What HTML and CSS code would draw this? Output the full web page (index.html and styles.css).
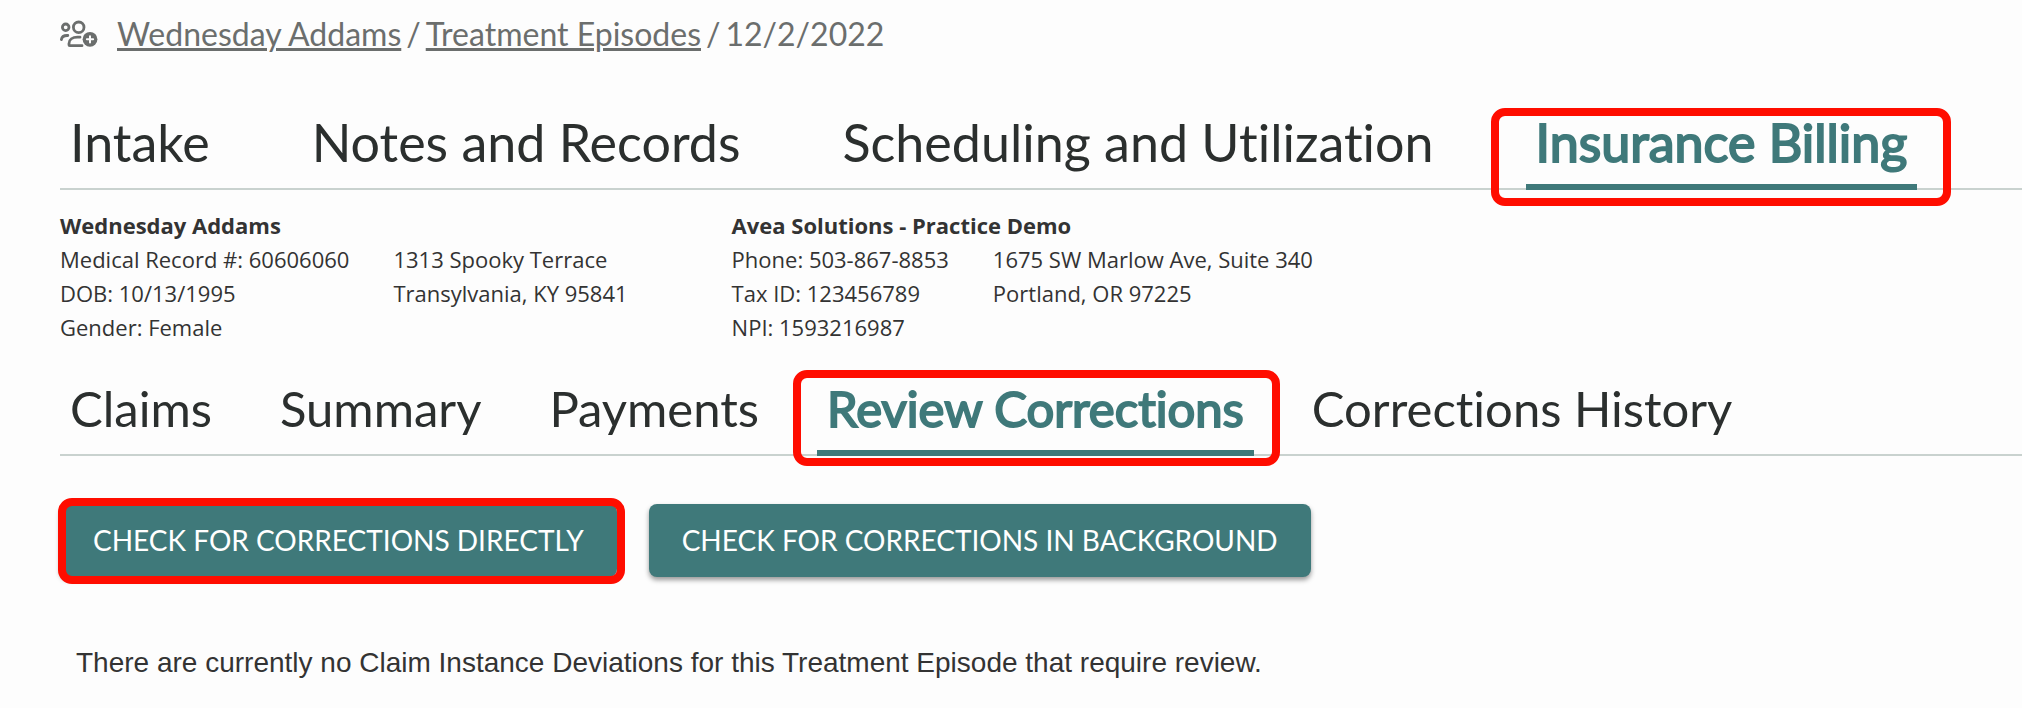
FILE: index.html
```html
<!DOCTYPE html>
<html lang="en">
<head>
  <meta charset="UTF-8">
  <meta name="viewport" content="width=device-width, initial-scale=1.0">
  <title>Review Corrections</title>
  <link rel="stylesheet" href="styles.css">
</head>
<body>
  <header class="breadcrumb">
    <svg class="breadcrumb-icon" viewBox="0 0 38 28" fill="none" stroke="currentColor" stroke-width="2.8" stroke-linecap="round" aria-hidden="true">
      <circle cx="5.7" cy="7.3" r="3.3"/>
      <circle cx="18.7" cy="7.3" r="5.3"/>
      <path d="M1.4 19.5C1.8 16.7 4 15.3 7.8 15.5"/>
      <path d="M20 17.2H17.5C12.5 17.2 9 19.5 9 23.5V25C9 25.6 9.3 25.7 9.8 25.7H22" stroke-linejoin="round"/>
      <circle cx="30" cy="19.3" r="7.4" fill="currentColor" stroke="none"/>
      <path d="M30 16.2V22.4M26.9 19.3H33.1" stroke="#fdfdfd" stroke-width="2"/>
    </svg>
    <nav class="crumbs" aria-label="Breadcrumb">
      <a href="#">Wednesday Addams</a>
      <span>/</span>
      <a href="#">Treatment Episodes</a>
      <span>/</span>
      <span>12/2/2022</span>
    </nav>
  </header>

  <nav class="tabs main-tabs">
    <a class="tab" href="#">Intake</a>
    <a class="tab" href="#">Notes and Records</a>
    <a class="tab" href="#">Scheduling and Utilization</a>
    <a class="tab active marked" href="#">Insurance Billing</a>
  </nav>

  <section class="info">
    <div class="info-block">
      <strong>Wednesday Addams</strong>
      <div class="info-cols">
        <div>Medical Record #: 60606060<br>DOB: 10/13/1995<br>Gender: Female</div>
        <div>1313 Spooky Terrace<br>Transylvania, KY 95841</div>
      </div>
    </div>
    <div class="info-block">
      <strong>Avea Solutions - Practice Demo</strong>
      <div class="info-cols">
        <div>Phone: 503-867-8853<br>Tax ID: 123456789<br>NPI: 1593216987</div>
        <div>1675 SW Marlow Ave, Suite 340<br>Portland, OR 97225</div>
      </div>
    </div>
  </section>

  <nav class="tabs sub-tabs">
    <a class="tab" href="#">Claims</a>
    <a class="tab" href="#">Summary</a>
    <a class="tab" href="#">Payments</a>
    <a class="tab active marked" href="#">Review Corrections</a>
    <a class="tab" href="#">Corrections History</a>
  </nav>

  <main>
    <div class="actions">
      <button class="btn marked" type="button">CHECK FOR CORRECTIONS DIRECTLY</button>
      <button class="btn" type="button">CHECK FOR CORRECTIONS IN BACKGROUND</button>
    </div>
    <p class="message">There are currently no Claim Instance Deviations for this Treatment Episode that require review.</p>
  </main>
</body>
</html>
```
FILE: styles.css
```css
* {
  box-sizing: border-box;
}
body {
  margin: 0;
  padding: 14px 0 0 60px;
  background: #fdfdfd;
  color: #333;
  font-family: Lato, sans-serif;
  font-variant-ligatures: none;
}
.breadcrumb {
  display: flex;
  align-items: center;
  gap: 19px;
  color: #6b6e6d;
  font-size: 32px;
  line-height: 40px;
}
.breadcrumb-icon {
  width: 38px;
  height: 28px;
}
.crumbs {
  display: flex;
  gap: 5px;
}
.crumbs a {
  color: inherit;
  text-decoration-thickness: 3px;
}

/* tabs */
.tabs {
  display: flex;
  border-bottom: 2px solid #c9d2cf;
  white-space: nowrap;
}
.tab {
  position: relative;
  margin-bottom: -2px;
  padding: 0 10px 8px;
  border-bottom: 6px solid transparent;
  color: #2b2f2e;
  line-height: 68px;
  text-decoration: none;
}
.tab.active {
  color: #3f797a;
  border-color: #3f797a;
  -webkit-text-stroke: 2px #3f797a;
}
.main-tabs {
  gap: 82px;
  margin-top: 54px;
  font-size: 52px;
}
.sub-tabs {
  gap: 48px;
  margin-top: 30px;
  font-size: 49px;
}

/* red highlight frame */
.marked::after {
  content: "";
  position: absolute;
  border: 8px solid #ff0d00;
  border-radius: 14px;
  pointer-events: none;
}
.main-tabs .marked::after {
  inset: 0 -34px -22px -35px;
}
.sub-tabs .marked::after {
  inset: -4px -26px -16px -24px;
}

/* patient and facility info */
.info {
  display: flex;
  gap: 104px;
  margin-top: 18px;
  font-family: "Open Sans", sans-serif;
  font-size: 22px;
  line-height: 34px;
}
.info-cols {
  display: flex;
  gap: 44px;
}

.actions {
  display: flex;
  gap: 32px;
  margin-top: 48px;
}
.btn {
  position: relative;
  padding: 0 33px;
  border: none;
  border-radius: 8px;
  background: #3f797a;
  box-shadow: 0 3px 5px rgba(0,0,0,0.4);
  color: #fff;
  font-family: inherit;
  font-size: 28px;
  line-height: 73px;
  cursor: pointer;
}
.btn.marked::after {
  inset: -6px -8px -7px -2px;
}
.message {
  margin: 68px 0 0 16px;
  font-family: "Liberation Sans", Arial, sans-serif;
  font-size: 28px;
  line-height: 36px;
}
```
